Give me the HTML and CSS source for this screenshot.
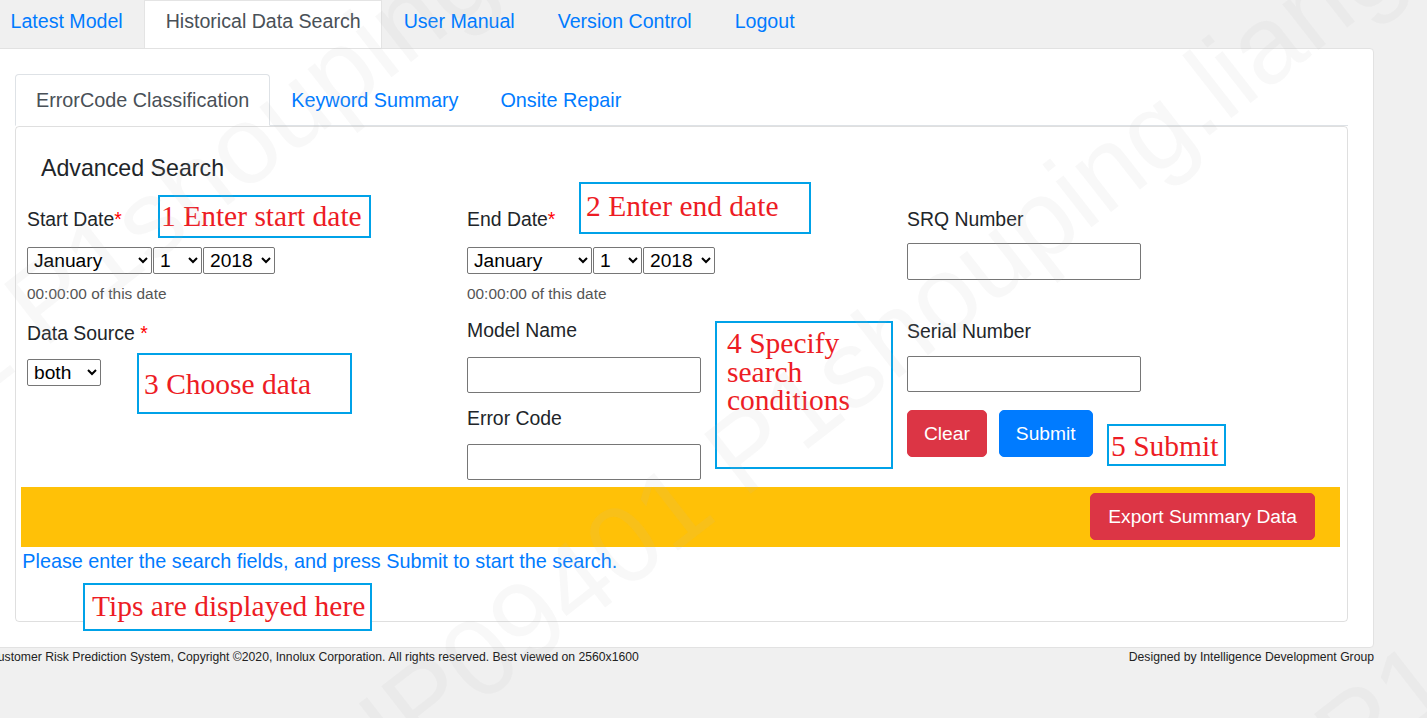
FILE: index.html
```html
<!DOCTYPE html>
<html lang="en">
<head>
<meta charset="utf-8">
<title>Historical Data Search</title>
<link rel="stylesheet" href="styles.css">
</head>
<body>
<div class="page">
  <nav class="topnav">
    <a class="topnav-link" href="#">Latest Model</a>
    <a class="topnav-link active" href="#">Historical Data Search</a>
    <a class="topnav-link" href="#">User Manual</a>
    <a class="topnav-link" href="#">Version Control</a>
    <a class="topnav-link" href="#">Logout</a>
  </nav>

  <main class="panel">
    <div class="tabs">
      <a class="tab active" href="#">ErrorCode Classification</a>
      <a class="tab" href="#">Keyword Summary</a>
      <a class="tab" href="#">Onsite Repair</a>
    </div>

    <section class="card">
      <h4 class="card-title">Advanced Search</h4>

      <div class="form-grid">
        <div class="col">
          <label class="label">Start Date<span class="req">*</span></label>
          <div class="date-row">
            <select class="sel-month"><option>January</option></select>
            <select class="sel-day"><option>1</option></select>
            <select class="sel-year"><option>2018</option></select>
          </div>
          <small class="help">00:00:00 of this date</small>
          <label class="label label-source">Data Source <span class="req">*</span></label>
          <select class="sel-source"><option>both</option></select>
        </div>

        <div class="col">
          <label class="label">End Date<span class="req">*</span></label>
          <div class="date-row">
            <select class="sel-month"><option>January</option></select>
            <select class="sel-day"><option>1</option></select>
            <select class="sel-year"><option>2018</option></select>
          </div>
          <small class="help">00:00:00 of this date</small>
          <label class="label label-model">Model Name</label>
          <input class="text-input input-model" type="text">
          <label class="label label-error">Error Code</label>
          <input class="text-input input-error" type="text">
        </div>

        <div class="col">
          <label class="label">SRQ Number</label>
          <input class="text-input input-srq" type="text">
          <label class="label label-serial">Serial Number</label>
          <input class="text-input input-serial" type="text">
          <div class="btn-row">
            <button class="btn btn-danger" type="button">Clear</button>
            <button class="btn btn-primary" type="button">Submit</button>
          </div>
        </div>
      </div>

      <div class="action-bar">
        <button class="btn btn-danger btn-export" type="button">Export Summary Data</button>
      </div>
      <p class="hint">Please enter the search fields, and press Submit to start the search.</p>
    </section>
  </main>

  <footer class="footer">
    <span>Customer Risk Prediction System, Copyright ©2020, Innolux Corporation. All rights reserved. Best viewed on 2560x1600</span>
    <span>Designed by Intelligence Development Group</span>
  </footer>
</div>

<div class="notes">
  <div class="note note-1">1 Enter start date</div>
  <div class="note note-2">2 Enter end date</div>
  <div class="note note-3">3 Choose data</div>
  <div class="note note-4">4 Specify<br>search<br>conditions</div>
  <div class="note note-5">5 Submit</div>
  <div class="note note-tips">Tips are displayed here</div>
</div>

<div class="watermarks">
  <span class="wm wm-1">HP09401 P1shouping.liang</span>
  <span class="wm wm-2">HP09401 P1shouping.liang</span>
  <span class="wm wm-3">HP09401 P1shouping.liang</span>
</div>
</body>
</html>
```

FILE: styles.css
```css
* { box-sizing: border-box; }

html, body {
  margin: 0;
  height: 100%;
}

body {
  position: relative;
  overflow: hidden;
  background: #f0f0f0;
  font-family: "Liberation Sans", Arial, sans-serif;
  color: #212529;
}

.page {
  margin-left: -11px;
  width: 1385px;
}

/* ---------- top navigation ---------- */
.topnav {
  display: flex;
  height: 48px;
}

.topnav-link {
  display: block;
  padding: 5px 20.5px 12px;
  border: 1px solid transparent;
  border-bottom: 0;
  font-size: 19.6px;
  line-height: 30px;
  color: #007bff;
  text-decoration: none;
}

.topnav-link.active {
  background: #fff;
  color: #495057;
  border-color: #e4e4e4;
}

/* ---------- main panel ---------- */
.panel {
  background: #fff;
  border: 1px solid #e2e2e2;
  border-radius: 4px;
  padding: 25px;
}

.tabs {
  display: flex;
  border-bottom: 1px solid #dee2e6;
}

.tab {
  display: block;
  margin-bottom: -1px;
  padding: 10px 20px;
  border: 1px solid transparent;
  border-radius: 4px 4px 0 0;
  font-size: 19.8px;
  line-height: 30px;
  color: #007bff;
  text-decoration: none;
}

.tab.active {
  color: #495057;
  background: #fff;
  border-color: #dee2e6 #dee2e6 #fff;
}

.card {
  border: 1px solid rgba(0, 0, 0, 0.125);
  border-radius: 4px;
  padding-bottom: 45px;
}

.card-title {
  margin: 27px 0 0 25px;
  font-size: 23.2px;
  line-height: 28px;
  font-weight: 400;
  color: #212529;
}

/* ---------- form ---------- */
.form-grid {
  display: grid;
  grid-template-columns: 440px 440px 440px;
  align-items: start;
  margin: 23px 0 0 11px;
}

.col {
  display: flex;
  flex-direction: column;
  align-items: flex-start;
}

.label {
  font-size: 19.4px;
  line-height: 29px;
  color: #212529;
}

.req {
  color: #ff0000;
}

.date-row {
  display: flex;
  gap: 1px;
  margin-top: 12.5px;
}

select {
  height: 27px;
  padding: 0 2px;
  font-family: "Liberation Sans", Arial, sans-serif;
  font-size: 19.2px;
  color: #000;
  background: #fff;
  border: 1px solid #767676;
  border-radius: 2px;
}

.sel-month { width: 125px; }
.sel-day { width: 49px; }
.sel-year { width: 72px; }
.sel-source { width: 74px; margin-top: 11.5px; }

.help {
  margin-top: 8px;
  font-size: 15.4px;
  line-height: 23px;
  color: #555;
}

.label-source { margin-top: 14.3px; }
.label-model { margin-top: 11.7px; }
.label-error { margin-top: 11.8px; }
.label-serial { margin-top: 36.5px; }

.text-input {
  width: 234px;
  height: 36px;
  border: 1px solid #767676;
  border-radius: 2px;
  background: #fff;
  font-family: inherit;
  font-size: 19.2px;
}

.input-model { margin-top: 11.5px; }
.input-error { margin-top: 10.8px; }
.input-srq { margin-top: 9px; height: 37px; }
.input-serial { margin-top: 10.5px; }

.btn-row {
  display: flex;
  gap: 12px;
  margin-top: 18px;
}

.btn {
  padding: 8px 16px;
  border: 1px solid transparent;
  border-radius: 5px;
  font-family: "Liberation Sans", Arial, sans-serif;
  font-size: 19.2px;
  line-height: 29px;
  color: #fff;
  cursor: pointer;
}

.btn-danger {
  background: #dc3545;
  border-color: #dc3545;
}

.btn-primary {
  background: #007bff;
  border-color: #007bff;
}

.action-bar {
  display: flex;
  justify-content: flex-end;
  align-items: flex-start;
  height: 60px;
  margin: 6.7px 7px 0 5px;
  padding: 6px 25px 0 0;
  background: #ffc107;
}

.btn-export {
  padding: 8px 17px;
}

.hint {
  margin: 0;
  padding-left: 6.3px;
  font-size: 19.8px;
  line-height: 29px;
  color: #007bff;
}

/* ---------- footer ---------- */
.footer {
  display: flex;
  justify-content: space-between;
  font-size: 12.2px;
  line-height: 18px;
  color: #222;
}

/* ---------- annotations (overlay) ---------- */
.notes {
  position: absolute;
  inset: 0;
  pointer-events: none;
}

.note {
  position: absolute;
  display: flex;
  align-items: center;
  border: 2px solid #00a2e8;
  background: #fff;
  font-family: "Liberation Serif", "Times New Roman", serif;
  font-size: 29.5px;
  line-height: 1;
  color: #ed1c24;
  white-space: nowrap;
}

.note-1 { left: 158px; top: 195px; width: 213px; height: 43px; padding-left: 1px; }
.note-2 { left: 579px; top: 182px; width: 232px; height: 52px; padding: 0 0 3px 5px; }
.note-3 { left: 137px; top: 353px; width: 215px; height: 61px; padding: 3px 0 0 5px; }
.note-4 {
  left: 715px; top: 321px; width: 178px; height: 148px;
  display: block;
  padding: 6px 0 0 10px;
  line-height: 28.5px;
}
.note-5 { left: 1107px; top: 424px; width: 119px; height: 42px; padding: 3px 0 0 2px; }
.note-tips { left: 83px; top: 583px; width: 289px; height: 48px; padding-left: 7px; }

/* ---------- watermark (overlay) ---------- */
.watermarks {
  position: absolute;
  inset: 0;
  overflow: hidden;
  pointer-events: none;
}

.wm {
  position: absolute;
  font-family: "Liberation Sans", Arial, sans-serif;
  font-size: 110px;
  line-height: 1;
  white-space: nowrap;
  color: rgba(190, 190, 190, 0.1);
  transform-origin: 50% 50%;
  transform: translate(-50%, -50%) rotate(-38deg);
}

.wm-1 { left: 160px; top: 210px; }
.wm-2 { left: 860px; top: 360px; }
.wm-3 { left: 1470px; top: 640px; }
```
